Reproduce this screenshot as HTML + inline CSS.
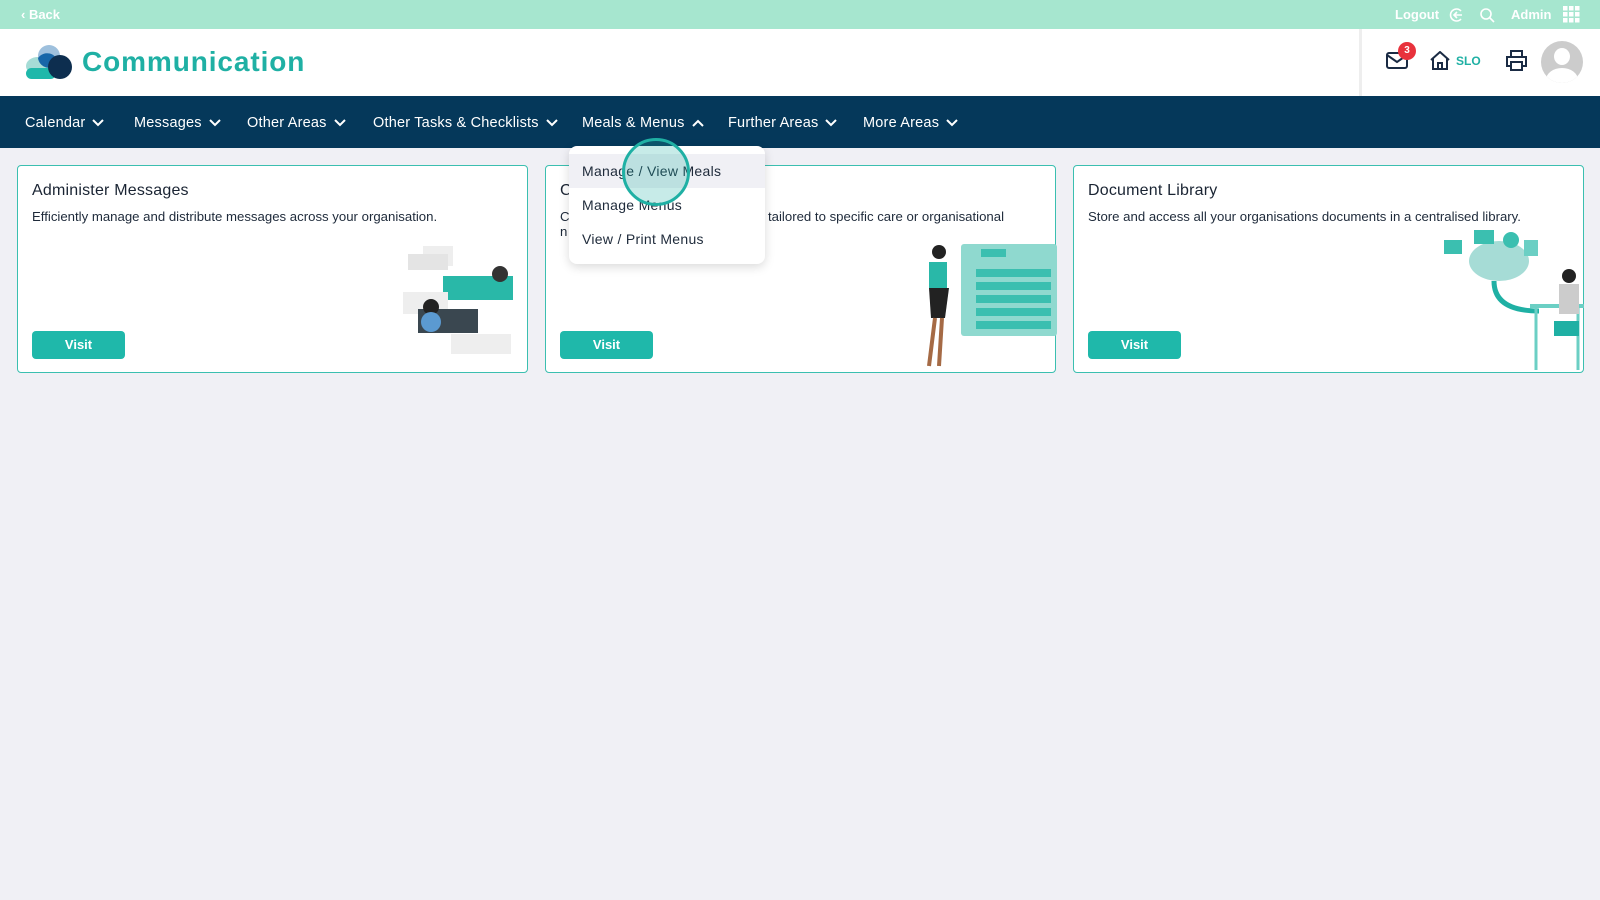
<!DOCTYPE html>
<html><head><meta charset="utf-8"><style>
*{box-sizing:border-box;margin:0;padding:0}
body{width:1600px;height:900px;background:#f0f0f5;font-family:"Liberation Sans",sans-serif;position:relative;overflow:hidden;color:#1e2a3a}
.top{height:29px;background:#a6e6cf;position:relative;color:#fff;font-size:13px;font-weight:bold}
.hdr{height:67px;background:#fff;position:relative}
.nav{height:52px;background:#05385a;position:relative;color:#fff;font-size:14.5px;letter-spacing:.2px}
.nav span{position:absolute;top:19px;display:flex;align-items:center;white-space:nowrap}
.nav span svg{margin-left:7px}
.card{position:absolute;top:165px;height:208px;width:511px;background:#fff;border:1px solid #3bbfb0;border-radius:4px}
.card h3{position:absolute;left:14px;top:16px;font-size:16px;font-weight:normal;color:#1a2433;letter-spacing:.2px}
.card p{position:absolute;left:14px;top:43px;font-size:13.2px;color:#1e2a3a;width:490px;line-height:15px;white-space:nowrap}
.btn{position:absolute;left:14px;top:165px;width:93px;height:28px;background:#1fb8aa;border-radius:4px;color:#fff;font-size:13px;font-weight:bold;text-align:center;line-height:28px}
.dd{position:absolute;left:569px;top:146px;width:196px;height:118px;background:#fff;border-radius:8px;box-shadow:0 3px 10px rgba(0,0,0,.15)}
.dd div{height:34px;line-height:34px;padding-left:13px;font-size:14px;color:#1e2a3a;letter-spacing:.3px}
</style></head><body>
<div class="top"><span style="position:absolute;left:21px;top:7px">‹ Back</span>
<span style="position:absolute;left:1395px;top:7px">Logout</span>
<svg style="position:absolute;left:1448px;top:7px" width="16" height="16" viewBox="0 0 16 16" fill="none" stroke="#fff" stroke-width="1.6"><path d="M13 4A6 6 0 1 0 13 12"/><path d="M6 8h8M9 5L6 8l3 3"/></svg>
<svg style="position:absolute;left:1479px;top:7px" width="16" height="16" viewBox="0 0 16 16" fill="none" stroke="#fff" stroke-width="1.6"><circle cx="7" cy="7" r="5"/><path d="M11 11l4 4"/></svg>
<span style="position:absolute;left:1511px;top:7px">Admin</span>
<svg style="position:absolute;left:1563px;top:6px" width="17" height="17" viewBox="0 0 17 17" fill="#fff"><rect x="0" y="0" width="4.5" height="4.5"/><rect x="6" y="0" width="4.5" height="4.5"/><rect x="12" y="0" width="4.5" height="4.5"/><rect x="0" y="6" width="4.5" height="4.5"/><rect x="6" y="6" width="4.5" height="4.5"/><rect x="12" y="6" width="4.5" height="4.5"/><rect x="0" y="12" width="4.5" height="4.5"/><rect x="6" y="12" width="4.5" height="4.5"/><rect x="12" y="12" width="4.5" height="4.5"/></svg>
</div>
<div class="hdr">
<svg style="position:absolute;left:24px;top:15px" width="50" height="36" viewBox="0 0 50 36"><ellipse cx="14" cy="22" rx="12" ry="9" fill="#a6dcd6"/><rect x="2" y="24" width="30" height="11" rx="5.5" fill="#1fb8aa"/><circle cx="25" cy="12" r="11" fill="#9ec0dd"/><path d="M14 14a11 11 0 0 0 20 5a11 11 0 0 0-20-5z" fill="#1766a8"/><circle cx="36" cy="23" r="12" fill="#0d2e4f"/></svg>
<span style="position:absolute;left:82px;top:17px;font-size:28px;font-weight:bold;color:#1fb0a4;letter-spacing:.9px">Communication</span>
<div style="position:absolute;left:1359px;top:0;width:3px;height:67px;background:#eee"></div>
<svg style="position:absolute;left:1386px;top:22px" width="22" height="18" viewBox="0 0 22 18" fill="none" stroke="#1a2b44" stroke-width="2"><rect x="1" y="2" width="20" height="15" rx="2"/><path d="M1 4l10 7 10-7"/></svg>
<div style="position:absolute;left:1398px;top:13px;width:18px;height:18px;border-radius:50%;background:#e8323c;color:#fff;font-size:10px;font-weight:bold;text-align:center;line-height:18px">3</div>
<svg style="position:absolute;left:1430px;top:22px" width="20" height="19" viewBox="0 0 20 19" fill="none" stroke="#1a2b44" stroke-width="2"><path d="M1 9L10 1l9 8M3 7v11h14V7M8 18v-6h4v6"/></svg>
<span style="position:absolute;left:1456px;top:25px;font-size:12px;font-weight:bold;color:#1fb0a4">SLO</span>
<svg style="position:absolute;left:1506px;top:21px" width="21" height="21" viewBox="0 0 21 21" fill="none" stroke="#1a2b44" stroke-width="2"><path d="M5 7V1h11v6M5 16H1V7h19v9h-4"/><rect x="5" y="12" width="11" height="8"/></svg>
<div style="position:absolute;left:1541px;top:12px;width:42px;height:42px;border-radius:50%;background:#ccc;overflow:hidden"><div style="position:absolute;left:13px;top:7px;width:16px;height:17px;border-radius:50%;background:#fff"></div><div style="position:absolute;left:5px;top:27px;width:32px;height:24px;border-radius:50%;background:#fff"></div></div>
</div>
<div class="nav">
<span style="left:25px">Calendar<svg width="12" height="8" viewBox="0 0 12 8"><path d="M1 1l5 5 5-5" stroke="#fff" stroke-width="2" fill="none"/></svg></span>
<span style="left:134px">Messages<svg width="12" height="8" viewBox="0 0 12 8"><path d="M1 1l5 5 5-5" stroke="#fff" stroke-width="2" fill="none"/></svg></span>
<span style="left:247px">Other Areas<svg width="12" height="8" viewBox="0 0 12 8"><path d="M1 1l5 5 5-5" stroke="#fff" stroke-width="2" fill="none"/></svg></span>
<span style="left:373px">Other Tasks &amp; Checklists<svg width="12" height="8" viewBox="0 0 12 8"><path d="M1 1l5 5 5-5" stroke="#fff" stroke-width="2" fill="none"/></svg></span>
<span style="left:582px">Meals &amp; Menus<svg width="12" height="8" viewBox="0 0 12 8"><path d="M1 7l5-5 5 5" stroke="#fff" stroke-width="2" fill="none"/></svg></span>
<span style="left:728px">Further Areas<svg width="12" height="8" viewBox="0 0 12 8"><path d="M1 1l5 5 5-5" stroke="#fff" stroke-width="2" fill="none"/></svg></span>
<span style="left:863px">More Areas<svg width="12" height="8" viewBox="0 0 12 8"><path d="M1 1l5 5 5-5" stroke="#fff" stroke-width="2" fill="none"/></svg></span>
</div>

<div class="card" style="left:17px"><h3>Administer Messages</h3><p>Efficiently manage and distribute messages across your organisation.</p><div class="btn">Visit</div>
<svg style="position:absolute;left:385px;top:78px" width="120" height="115" viewBox="0 0 120 115"><rect x="20" y="2" width="30" height="20" fill="#eee"/><rect x="5" y="10" width="40" height="16" fill="#e4e4e4"/><rect x="40" y="32" width="70" height="24" fill="#29b8a8"/><circle cx="97" cy="30" r="8" fill="#333"/><rect x="0" y="48" width="45" height="22" fill="#eee"/><rect x="15" y="65" width="60" height="24" fill="#3a4750"/><circle cx="28" cy="63" r="8" fill="#222"/><circle cx="28" cy="78" r="10" fill="#5b9ad1"/><rect x="48" y="90" width="60" height="20" fill="#eee"/></svg>
</div>
<div class="card" style="left:545px"><h3>C</h3><p>C</p><p style="top:58px">n</p><p style="left:222px">tailored to specific care or organisational</p><div class="btn">Visit</div>
<svg style="position:absolute;left:365px;top:78px" width="146" height="130" viewBox="0 0 146 130"><rect x="50" y="0" width="96" height="92" rx="3" fill="#8fd9cf"/><g fill="#3bbfb0"><rect x="70" y="5" width="25" height="8"/><rect x="65" y="25" width="75" height="8"/><rect x="65" y="38" width="75" height="8"/><rect x="65" y="51" width="75" height="8"/><rect x="65" y="64" width="75" height="8"/><rect x="65" y="77" width="75" height="8"/></g><circle cx="28" cy="8" r="7" fill="#222"/><rect x="18" y="18" width="18" height="26" fill="#29b8a8"/><path d="M18 44h20l-4 30H20z" fill="#222"/><path d="M24 74l-6 48M31 74l-3 48" stroke="#a56a45" stroke-width="4"/></svg>
</div>
<div class="card" style="left:1073px"><h3>Document Library</h3><p>Store and access all your organisations documents in a centralised library.</p><div class="btn">Visit</div>
<svg style="position:absolute;left:370px;top:60px" width="140" height="148" viewBox="0 0 140 148"><ellipse cx="55" cy="35" rx="30" ry="20" fill="#a6dcd6"/><rect x="0" y="14" width="18" height="14" fill="#3bbfb0"/><rect x="30" y="4" width="20" height="14" fill="#3bbfb0"/><circle cx="67" cy="14" r="8" fill="#3bbfb0"/><rect x="80" y="14" width="14" height="16" fill="#6bcfc4"/><path d="M50 55q0 30 45 30" stroke="#1fb0a4" stroke-width="5" fill="none"/><rect x="86" y="78" width="54" height="4" fill="#6bcfc4"/><path d="M92 82v62M134 82v62" stroke="#6bcfc4" stroke-width="3"/><circle cx="125" cy="50" r="7" fill="#222"/><rect x="115" y="58" width="20" height="30" fill="#ccc"/><rect x="110" y="95" width="25" height="15" fill="#1fb0a4"/></svg>
</div>

<div class="dd"><div style="background:#f0f0f5;margin-top:8px">Manage / View Meals</div><div>Manage Menus</div><div>View / Print Menus</div></div>
<div style="position:absolute;left:622px;top:138px;width:68px;height:68px;border-radius:50%;border:3px solid #1fb0a4;background:rgba(31,176,164,.25)"></div>
</body></html>
